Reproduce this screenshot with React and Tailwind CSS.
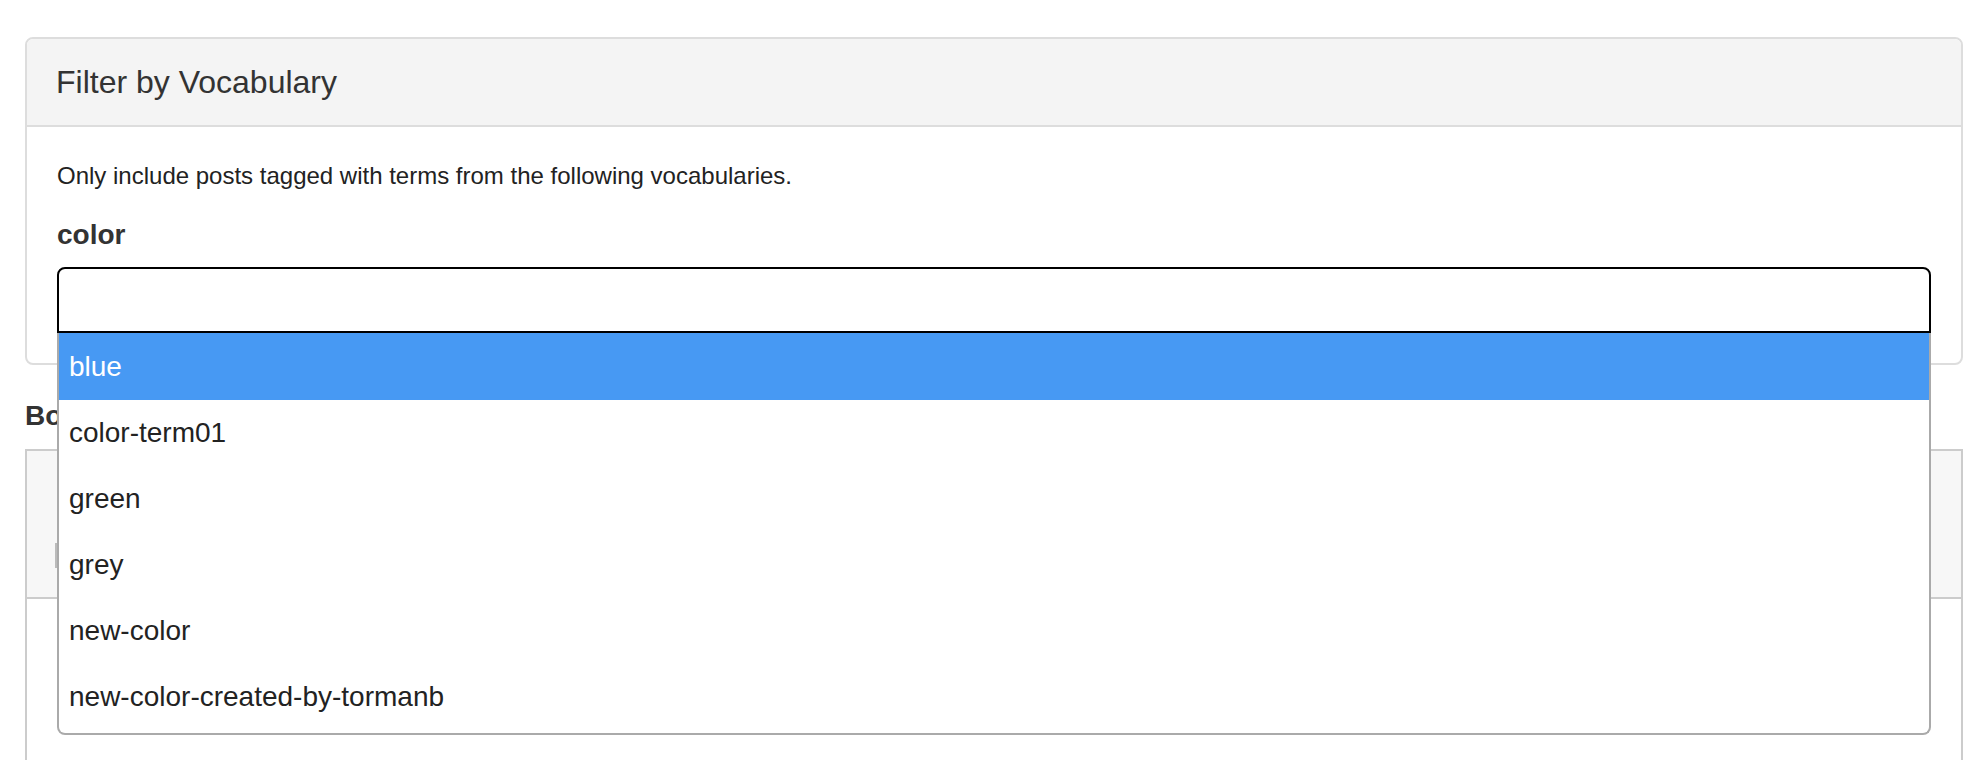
import React from 'react';

const terms = ['blue', 'color-term01', 'green', 'grey', 'new-color', 'new-color-created-by-tormanb'];

function VocabularyDropdown() {
    return (
        <div className="relative">
            {/* focused search box */}
            <div className="h-[66px] border-2 border-black rounded-t-[8px] bg-white" />
            {/* open results list */}
            <ul className="absolute left-0 right-0 top-full z-10 bg-white border-2 border-t-0 border-[#aaa] rounded-b-[8px] pb-[3px]">
                {terms.map((term, i) => (
                    <li
                        key={term}
                        className={
                            i === 0
                                ? 'h-[67px] flex items-center pl-[10px] text-[28px] bg-[#4799f3] text-white'
                                : 'h-[66px] flex items-center pl-[10px] text-[28px] text-[#222]'
                        }
                    >
                        {term}
                    </li>
                ))}
            </ul>
        </div>
    );
}

export default function App() {
    return (
        <div
            className="h-[760px] bg-white pl-[25px] pr-[21px] pt-[37px] overflow-hidden"
            style={{ fontFamily: '"Liberation Sans", Arial, sans-serif' }}
        >
            {/* Filter by Vocabulary panel */}
            <div className="border-2 border-[#ddd] rounded-[8px] bg-white">
                <div className="h-[88px] flex items-center px-[29px] bg-[#f4f4f4] border-b-2 border-[#ddd] rounded-t-[6px]">
                    <h3 className="text-[32px] leading-[40px] text-[#333]">Filter by Vocabulary</h3>
                </div>
                <div className="px-[30px] pt-[32px] pb-[30px]">
                    <p className="text-[24px] leading-[34px] text-[#222]">
                        Only include posts tagged with terms from the following vocabularies.
                    </p>
                    <label className="block mt-[22px] mb-[12px] text-[28px] leading-[40px] font-bold text-[#333]">color</label>
                    <VocabularyDropdown />
                </div>
            </div>

            {/* next section, mostly hidden by the open list */}
            <h4 className="mt-[31px] mb-[13px] text-[28px] leading-[40px] font-bold text-[#333]">Bounding Box</h4>
            <div className="border-2 border-[#ccc] border-b-0 h-[320px]">
                <div className="h-[148px] bg-[#f7f7f7] border-b-2 border-[#ccc] pl-[28px] pt-[92px]">
                    <div className="h-[25px] w-[300px] border-l-2 border-[#bbb]" />
                </div>
            </div>
        </div>
    );
}
